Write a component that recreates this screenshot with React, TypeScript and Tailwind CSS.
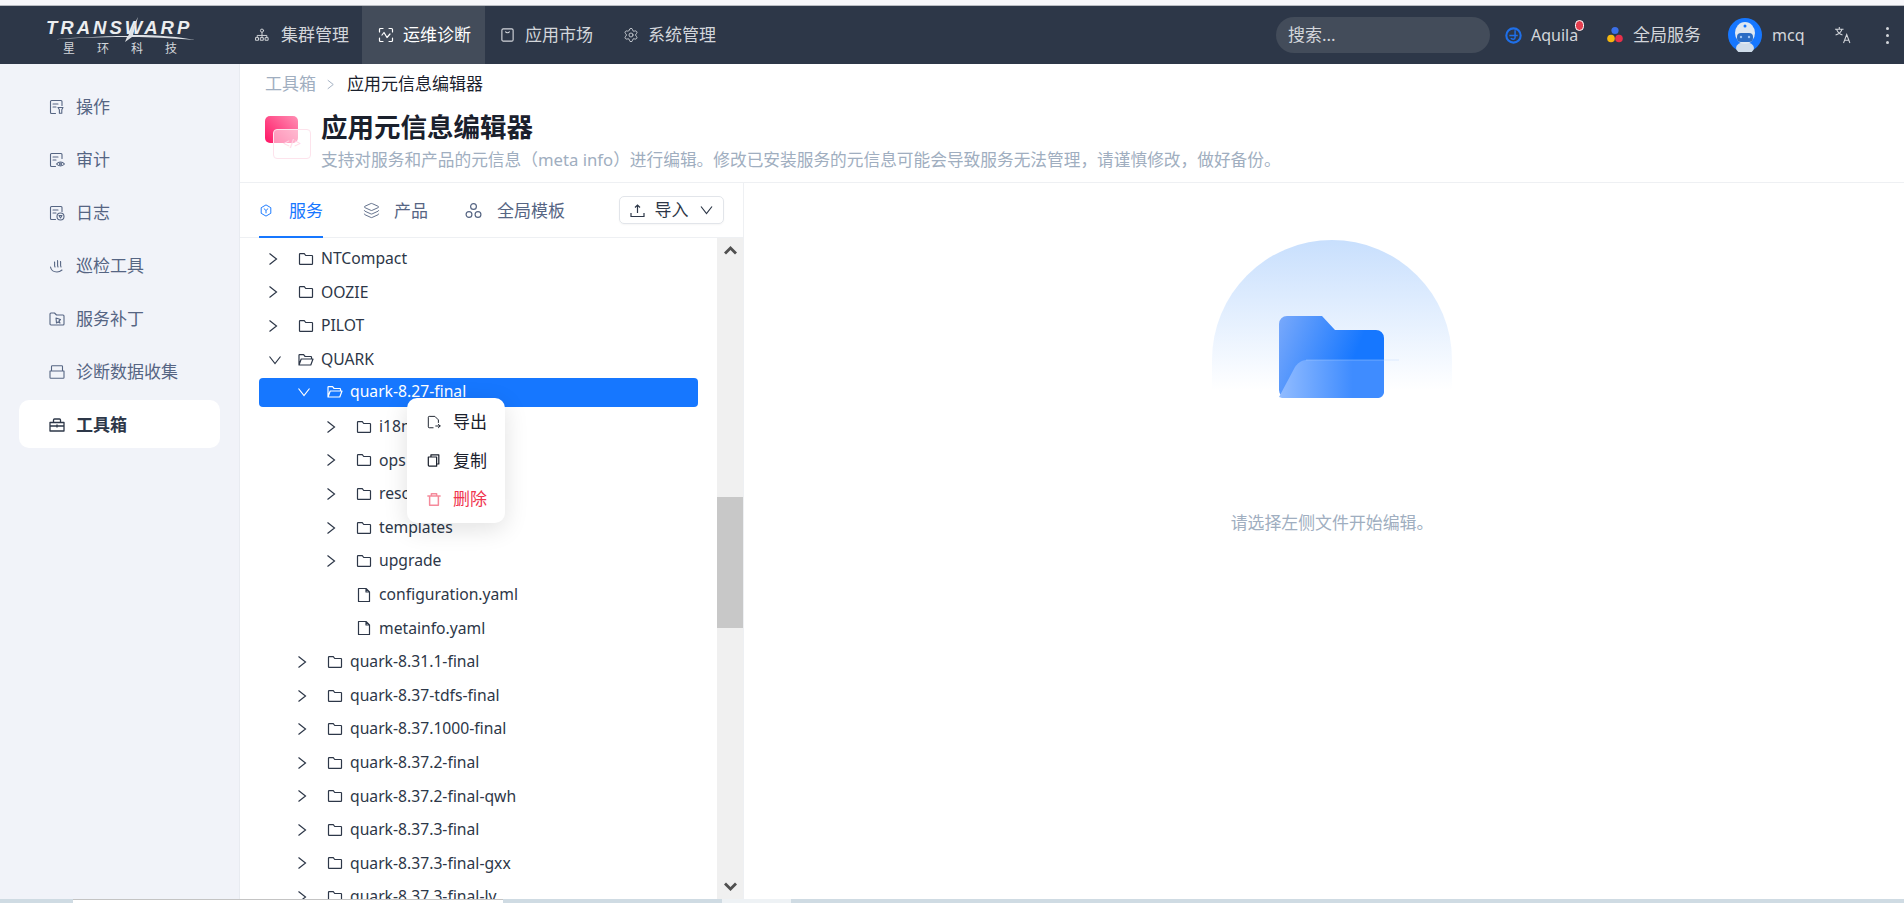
import React from "react";
import { Settings, Layers } from "lucide-react";

const S = (p: React.SVGProps<SVGSVGElement>) => (
  <svg viewBox="0 0 16 16" fill="none" stroke="currentColor" strokeWidth={1.1} strokeLinecap="round" strokeLinejoin="round" {...p} />
);

const DocBase = () => <path d="M6.5 14.5H2.5a1 1 0 0 1-1-1v-11a1 1 0 0 1 1-1h9.5a1 1 0 0 1 1 1v4M4 5h5M4 8h3" />;
const Op = () => (
  <S className="w-[16px] h-[16px]"><DocBase /><path d="M9 8.5h5l-1.2 2.2v3.5h-2.4v-3.5z" /></S>
);
const Audit = () => (
  <S className="w-[16px] h-[16px]"><DocBase /><path d="M7.5 12c2.2-2.6 5.8-2.6 8 0-2.2 2.6-5.8 2.6-8 0z" /><circle cx="11.5" cy="12" r="1" /></S>
);
const Log = () => (
  <S className="w-[16px] h-[16px]"><DocBase /><circle cx="11.5" cy="11.5" r="3.5" /><path d="M10 10.5h3l-1.5 2.5z" /></S>
);
const Hand = () => (
  <S className="w-[16px] h-[16px]"><path d="M1.5 9c.5 3 3 5 6.5 5 2 0 3.5-.7 5-2M6 9C5 7 6 6 5.5 4M9 9C8 7 9 5 8.5 2.5M12 9c-1-2 0-3.5-.5-5.5" /></S>
);
const Patch = () => (
  <S className="w-[16px] h-[16px]"><path d="M1 3a1 1 0 0 1 1-1h3.5l2 2H14a1 1 0 0 1 1 1v8a1 1 0 0 1-1 1H2a1 1 0 0 1-1-1z" /><path d="M7 7l4.500 1.500-1.500 1.500 1 2-2-1-1.500 1z" /></S>
);
const Box = () => (
  <S className="w-[16px] h-[16px]"><path d="M1 7h14M1 7v6.500a.8.8 0 0 0 .8.8h12.400a.8.8 0 0 0 .8-.8V7M2.500 7V2.500a.8.8 0 0 1 .8-.8h9.400a.8.8 0 0 1 .8.8V7" /></S>
);
const Toolbox = () => (
  <S className="w-[16px] h-[16px]" strokeWidth={1.3}><path d="M1 5.500h14v8.500H1zM1 9h14M8 8v2M4.500 5.500V3a1 1 0 0 1 1-1h5a1 1 0 0 1 1 1v2.500" /></S>
);

const Sitemap = () => (
  <S className="w-[14px] h-[14px]"><circle cx="8" cy="3" r="1.8" /><rect x="1" y="11" width="3" height="3" /><rect x="6.5" y="11" width="3" height="3" /><rect x="12" y="11" width="3" height="3" /><path d="M8 5v6M2.500 11V8.500h11V11" /></S>
);
const Diag = () => (
  <S className="w-[16px] h-[16px]" strokeWidth={1.2}><path d="M1.500 5V2.500a1 1 0 0 1 1-1H5M11 1.500h2.500a1 1 0 0 1 1 1V5M14.500 11v2.500a1 1 0 0 1-1 1H11M5 14.500H2.500a1 1 0 0 1-1-1V11M4 8l2-2.500 3 5L12 7" /></S>
);
const Market = () => (
  <S className="w-[15px] h-[16px]" strokeWidth={1.2}><rect x="2" y="1.5" width="12" height="13" rx="1.5" /><path d="M6 4.500c.3 1.500 3.700 1.500 4 0" /></S>
);

const Folder = () => (
  <S className="w-[16px] h-[16px]" strokeWidth={1.2}><path d="M1.5 3.300a.6.6 0 0 1 .6-.6h4.200l1.400 1.800h6.200a.6.6 0 0 1 .6.6v7.700a.6.6 0 0 1-.6.6H2.100a.6.6 0 0 1-.6-.6z" /></S>
);
const FolderOpen = () => (
  <S className="w-[16px] h-[16px]" strokeWidth={1.2}><path d="M1 13V3.300a.6.6 0 0 1 .6-.6h4l1.500 1.800h5.800a.6.6 0 0 1 .6.6V7M1 13l2.200-6H15l-2.200 6z" /></S>
);
const FileI = () => (
  <S className="w-[16px] h-[16px]" strokeWidth={1.2}><path d="M2.500 1.500h7.500l3.500 3.500v9.500h-11zM10 1.500V5h3.500" /></S>
);
const Right = ({ c = "w-[10px] h-[14px]" }: { c?: string }) => (
  <svg viewBox="0 0 10 14" className={c} fill="none" stroke="currentColor" strokeWidth={1.2}><path d="M1.500 1.500L8.500 7l-7 5.500" /></svg>
);
const Down = ({ c = "w-[14px] h-[10px]" }: { c?: string }) => (
  <svg viewBox="0 0 14 10" className={c} fill="none" stroke="currentColor" strokeWidth={1.2}><path d="M1.500 1.500L7 8.500l5.500-7" /></svg>
);

type Row = { l: number; t: string; kind: "closed" | "open" | "file"; sel?: boolean };
const rows: Row[] = [
  { l: 0, t: "NTCompact", kind: "closed" },
  { l: 0, t: "OOZIE", kind: "closed" },
  { l: 0, t: "PILOT", kind: "closed" },
  { l: 0, t: "QUARK", kind: "open" },
  { l: 1, t: "quark-8.27-final", kind: "open", sel: true },
  { l: 2, t: "i18n", kind: "closed" },
  { l: 2, t: "ops", kind: "closed" },
  { l: 2, t: "resources", kind: "closed" },
  { l: 2, t: "templates", kind: "closed" },
  { l: 2, t: "upgrade", kind: "closed" },
  { l: 2, t: "configuration.yaml", kind: "file" },
  { l: 2, t: "metainfo.yaml", kind: "file" },
  { l: 1, t: "quark-8.31.1-final", kind: "closed" },
  { l: 1, t: "quark-8.37-tdfs-final", kind: "closed" },
  { l: 1, t: "quark-8.37.1000-final", kind: "closed" },
  { l: 1, t: "quark-8.37.2-final", kind: "closed" },
  { l: 1, t: "quark-8.37.2-final-qwh", kind: "closed" },
  { l: 1, t: "quark-8.37.3-final", kind: "closed" },
  { l: 1, t: "quark-8.37.3-final-gxx", kind: "closed" },
  { l: 1, t: "quark-8.37.3-final-lv", kind: "closed" },
];

const sideItems: [React.ReactNode, string][] = [
  [<Op />, "操作"],
  [<Audit />, "审计"],
  [<Log />, "日志"],
  [<Hand />, "巡检工具"],
  [<Patch />, "服务补丁"],
  [<Box />, "诊断数据收集"],
];

export default function App() {
  return (
    <div className="w-[1904px] h-[903px] flex flex-col overflow-hidden bg-white text-[#2d3748] font-['Noto_Sans','Noto_Sans_CJK_SC',sans-serif]">
      <div className="h-[6px] shrink-0 bg-[#f7f7fa] border-b border-[#b9bcc2]" />

      {/* Header */}
      <header className="h-[58px] shrink-0 bg-[#2d3748] flex items-center text-[#d3d6db] text-[17px]">
        <div className="relative w-[255px] shrink-0 h-full">
          <div className="absolute left-[46px] top-[12px] text-[#eceef0] text-[18.5px] leading-[20px] font-bold italic tracking-[3px] font-['Liberation_Sans',sans-serif] whitespace-nowrap">
            TRANSWARP
          </div>
          <svg className="absolute left-[40px] top-[5px] w-[160px] h-[34px]" viewBox="0 0 160 34" fill="none">
            <path d="M5 29C40 26 70 25 88 25L98 6 93 24C120 24 140 26 155 29 130 27 110 26 92 26L85 31 87 26C55 26 30 27 5 29z" fill="#dfe2e6" />
          </svg>
          <div className="absolute left-[63px] top-[36px] w-[114px] flex justify-between text-[12px] leading-[14px] text-[#d3d6db]">
            <span>星</span><span>环</span><span>科</span><span>技</span>
          </div>
        </div>
        <nav className="flex h-full">
          <div className="flex items-center gap-[12px] w-[107px] h-full"><Sitemap /><span>集群管理</span></div>
          <div className="flex items-center gap-[9px] w-[123px] h-full bg-[#434c5a] pl-[16px] text-white"><Diag /><span>运维诊断</span></div>
          <div className="flex items-center gap-[10px] w-[138px] h-full pl-[15px]"><Market /><span>应用市场</span></div>
          <div className="flex items-center gap-[9px] h-full"><Settings className="w-[16px] h-[16px]" strokeWidth={1.3} /><span>系统管理</span></div>
        </nav>
        <div className="ml-auto flex items-center h-full">
          <div className="w-[214px] h-[36px] rounded-full bg-[#434c5a] px-[12px] flex items-center">搜索...</div>
          <svg className="ml-[15px] w-[17px] h-[19px]" viewBox="0 0 16 18" fill="none" stroke="#1f6fe8" strokeWidth={2}>
            <circle cx="8" cy="9" r="6.8" /><path d="M9.500 4v7c0 2-3 2-4 .5M4 9h8" strokeWidth={1.4} />
          </svg>
          <div className="relative ml-[9px] w-[47px] text-[16px]">
            Aquila
            <span className="absolute left-[44px] top-[-3px] w-[9px] h-[11px] rounded-full bg-[#e53e4f] border border-white" />
          </div>
          <svg className="ml-[29px] w-[16px] h-[18px]" viewBox="0 0 16 18">
            <circle cx="8" cy="4.5" r="3.6" fill="#3b6fe8" /><circle cx="4" cy="12.5" r="3.8" fill="#f5b70f" /><circle cx="12" cy="12.5" r="3.8" fill="#e8304a" />
          </svg>
          <span className="ml-[10px]">全局服务</span>
          <svg className="ml-[27px] w-[34px] h-[34px]" viewBox="0 0 34 34">
            <circle cx="17" cy="17" r="17" fill="#1677ff" />
            <ellipse cx="17" cy="30" rx="9" ry="6" fill="#cfdcea" />
            <ellipse cx="17" cy="15" rx="10" ry="11" fill="#dfe8f2" />
            <rect x="9" y="15" width="16" height="9" rx="4" fill="#2b6cc4" />
            <circle cx="13" cy="19" r="1.2" fill="#9cc4f5" />
            <circle cx="21" cy="19" r="1.2" fill="#9cc4f5" />
            <circle cx="17" cy="8" r="1.5" fill="#1677ff" />
          </svg>
          <span className="ml-[10px] w-[32px] text-[16px]">mcq</span>
          <svg className="ml-[30px] w-[18px] h-[18px]" viewBox="0 0 17 17" fill="none" stroke="currentColor" strokeWidth={1}>
            <path d="M1 3h8M5 1v2M2.500 3c.5 2.500 2.500 4.500 5.500 5.500M7.500 3C7 5.500 5 7.500 1.500 8.500M9 16l3-8 3 8M10 13.500h4" />
          </svg>
          <div className="ml-[34px] mr-[15px] flex flex-col gap-[4px]">
            <span className="w-[3px] h-[3px] rounded-full bg-[#d3d6db]" />
            <span className="w-[3px] h-[3px] rounded-full bg-[#d3d6db]" />
            <span className="w-[3px] h-[3px] rounded-full bg-[#d3d6db]" />
          </div>
        </div>
      </header>

      <div className="flex-1 min-h-0 flex">
        {/* Sidebar */}
        <aside className="w-[240px] shrink-0 bg-[#f1f3f9] border-r border-[#e8ebf1] pt-[18px] px-[19px] flex flex-col gap-[5px] text-[17px] text-[#566583]">
          {sideItems.map(([ic, t]) => (
            <div key={t} className="h-[48px] pl-[30px] pt-[2px] flex items-center gap-[11px]">{ic}<span>{t}</span></div>
          ))}
          <div className="h-[48px] pl-[30px] pt-[1px] flex items-center gap-[11px] bg-white rounded-[10px] text-[#2d3748] font-bold w-[201px]">
            <Toolbox /><span>工具箱</span>
          </div>
        </aside>

        {/* Main */}
        <main className="flex-1 min-w-0 flex flex-col">
          <div className="h-[119px] shrink-0 border-b border-[#eef0f3] pl-[25px] flex flex-col">
            <div className="h-[38px] shrink-0 flex items-center text-[17px] text-[#a0aec0] pt-[2px]">
              <span>工具箱</span>
              <Right c="w-[9px] h-[11px] ml-[10px] mr-[12px]" />
              <span className="text-[#1a202c]">应用元信息编辑器</span>
            </div>
            <div className="flex items-start">
              <div className="relative w-[46px] h-[45px] mt-[12px]">
                <div className="absolute left-0 top-[2px] w-[33px] h-[27px] rounded-[5px] [background-image:linear-gradient(45deg,#ff1464,#ff8fb4)]" />
                <div className="absolute left-[8px] top-[15px] w-[38px] h-[30px] rounded-[4px] bg-white/50 border border-[#fde3ec] flex items-center justify-center text-[12px] leading-none text-[#ffd9e6]">
                  &lt;/&gt;
                </div>
              </div>
              <div className="ml-[10px] mt-[8px]">
                <h1 className="text-[26.5px] leading-[34px] font-bold text-[#1a202c]">应用元信息编辑器</h1>
                <p className="text-[16.7px] leading-[24px] mt-[4px] text-[#a0aec0] whitespace-nowrap">
                  支持对服务和产品的元信息（meta info）进行编辑。修改已安装服务的元信息可能会导致服务无法管理，请谨慎修改，做好备份。
                </p>
              </div>
            </div>
          </div>

          <div className="flex-1 min-h-0 flex">
            {/* Left panel */}
            <section className="w-[504px] shrink-0 border-r border-[#eef0f3] flex flex-col">
              <div className="h-[55px] shrink-0 border-b border-[#eef0f3] pl-[19px] flex text-[17px] text-[#566583]">
                <div className="relative flex items-center gap-[17px] w-[64px] pl-[1px] pt-[1px] text-[#1677ff] whitespace-nowrap">
                  <svg className="w-[16px] h-[17px]" viewBox="0 0 15 16" fill="none" stroke="currentColor" strokeWidth={1.2}>
                    <path d="M7.500 1l6 3.500v7l-6 3.500-6-3.500v-7zM4.800 5.500l2.700 2.500 2.700-2.500M7.500 8v3.500" />
                  </svg>
                  <span>服务</span>
                  <span className="absolute left-0 right-0 bottom-[-1px] h-[2px] bg-[#1677ff]" />
                </div>
                <div className="flex items-center gap-[14px] ml-[40px] pt-[1px]">
                  <Layers className="w-[17px] h-[17px]" strokeWidth={1.3} /><span>产品</span>
                </div>
                <div className="flex items-center gap-[15px] ml-[37px] pt-[1px]">
                  <svg className="w-[17px] h-[17px]" viewBox="0 0 17 16" fill="none" stroke="currentColor" strokeWidth={1.2}>
                    <circle cx="8.5" cy="4" r="2.9" /><circle cx="4" cy="12" r="2.9" /><circle cx="13" cy="12" r="2.9" />
                  </svg>
                  <span>全局模板</span>
                </div>
                <div className="ml-[54px] mt-[13px] w-[105px] h-[28px] rounded-[5px] border border-[#e2e5ea] shadow-[0_1px_2px_rgba(0,0,0,0.04)] flex items-center justify-center gap-[10px] text-[#2d3748] text-[17px]">
                  <svg className="w-[15px] h-[15px]" viewBox="0 0 15 15" fill="none" stroke="currentColor" strokeWidth={1.2}>
                    <path d="M1 10v3.500h13V10M7.500 10V2M5 4.500L7.500 2 10 4.500" />
                  </svg>
                  <span>导入</span>
                  <Down c="w-[15px] h-[10px]" />
                </div>
              </div>

              <div className="relative flex-1 min-h-0 flex overflow-hidden">
                <div className="flex-1 min-w-0 pt-[4px] pl-[19px] pr-[19px] text-[15.7px]">
                  {rows.map((r) => (
                    <div
                      key={r.t}
                      className={r.sel ? "h-[29px] mt-[1.3px] mb-[3.3px] flex items-center rounded-[4px] bg-[#1677ff] text-white" : "h-[33.6px] flex items-center text-[#2d3748]"}
                    >
                      <div className={r.l === 0 ? "w-0" : r.l === 1 ? "w-[29px]" : "w-[58px]"} />
                      <div className="w-[39px] pl-[9px] shrink-0 flex items-center">
                        {r.kind === "closed" && <Right />}
                        {r.kind === "open" && <Down />}
                      </div>
                      <div className="w-[16px] mr-[6px] shrink-0 flex">
                        {r.kind === "closed" && <Folder />}
                        {r.kind === "open" && <FolderOpen />}
                        {r.kind === "file" && <FileI />}
                      </div>
                      <span className="ml-[1px] whitespace-nowrap">{r.t}</span>
                    </div>
                  ))}
                </div>
                {/* Scrollbar */}
                <div className="w-[26px] shrink-0 bg-[#f0f0f0] flex flex-col items-center relative">
                  <svg className="mt-[8px] w-[13px] h-[9px]" viewBox="0 0 13 9" fill="#505050"><path d="M6.500 0L13 6.500 11 8.500 6.500 4 2 8.500 0 6.500z" /></svg>
                  <div className="mt-[242px] w-full h-[131px] bg-[#c8c8c8]" />
                  <svg className="mt-auto mb-[8px] w-[13px] h-[9px]" viewBox="0 0 13 9" fill="#505050"><path d="M6.500 9L13 2.500 11 .5 6.500 5 2 .5 0 2.500z" /></svg>
                </div>

                {/* Context menu */}
                <div className="absolute left-[167px] top-[160px] w-[98px] h-[125px] rounded-[10px] bg-white shadow-[0_6px_24px_rgba(0,0,0,0.12)] flex flex-col justify-center gap-[4.5px] pl-[20px] text-[17px] text-[#1a202c]">
                  <div className="h-[34px] flex items-center gap-[12px]">
                    <S className="w-[14px] h-[15px]"><path d="M7 14H2.500a1 1 0 0 1-1-1V2a1 1 0 0 1 1-1H9l4 4v3M10 12h5M13 10l2 2-2 2" /></S>
                    <span>导出</span>
                  </div>
                  <div className="h-[34px] flex items-center gap-[12px]">
                    <S className="w-[14px] h-[15px]" strokeWidth={1.4}><path d="M4.500 4V1.500h9V12H11M1.500 4h9.500v10.500H3a1.500 1.500 0 0 1-1.500-1.500z" /></S>
                    <span>复制</span>
                  </div>
                  <div className="h-[34px] flex items-center gap-[12px] text-[#f0364f]">
                    <S className="w-[14px] h-[15px] text-[#f58a9b]" strokeWidth={1.7}><path d="M1 4h14M5 4V1.500h6V4M3 4v10.500h10V4" /></S>
                    <span>删除</span>
                  </div>
                </div>
              </div>
            </section>

            {/* Right panel */}
            <section className="flex-1 min-w-0 flex flex-col items-center pt-[57px] pl-[16px]">
              <div className="relative w-[240px] h-[160px]">
                <div className="w-[240px] h-[150px] rounded-t-full bg-gradient-to-b from-[#c8dffd] to-white" />
                <svg className="absolute left-[67px] top-[76px] w-[120px] h-[84px]" viewBox="0 0 120 84" fill="none">
                  <defs>
                    <linearGradient id="fb" x1="0" y1="0" x2="1" y2="0.3">
                      <stop offset="0" stopColor="#79a9fb" />
                      <stop offset="0.8" stopColor="#1677ff" />
                    </linearGradient>
                    <linearGradient id="ff" x1="0" y1="0" x2="1" y2="0">
                      <stop offset="0" stopColor="#92bcff" />
                      <stop offset="0.7" stopColor="#3f8cff" />
                    </linearGradient>
                  </defs>
                  <path d="M0 8a8 8 0 0 1 8-8h35l13 14h41a8 8 0 0 1 8 8v52a8 8 0 0 1-8 8H8a8 8 0 0 1-8-8z" fill="url(#fb)" />
                  <path d="M0 81l16-30c2-3 6-7 11-7h78v32a6 6 0 0 1-6 6H3z" fill="url(#ff)" />
                  <path d="M27 44h93" stroke="#bcd6ff" strokeOpacity={0.4} />
                </svg>
              </div>
              <p className="mt-[111px] text-[16.9px] leading-[24px] text-[#a0aec0]">请选择左侧文件开始编辑。</p>
            </section>
          </div>
        </main>
      </div>

      {/* Clipped strip of the desktop below the window */}
      <div className="h-[4px] shrink-0 bg-[#cfdbe3] flex">
        <div className="ml-[73px] w-[430px] h-full bg-white border-t border-[#c4c4c4]" />
        <div className="ml-[219px] w-[69px] h-full bg-[#eef2f5]" />
      </div>
    </div>
  );
}
